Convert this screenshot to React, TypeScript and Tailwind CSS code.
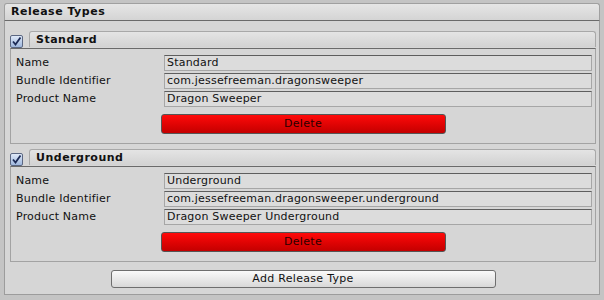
import React from 'react';

const font = { fontFamily: '"DejaVu Sans", Verdana, sans-serif' };

const CheckBox: React.FC = () => (
  <div className="w-[13px] h-[13px] mt-[4px] mr-[6px] shrink-0 rounded-[2px] border border-[#5b6782] bg-gradient-to-b from-[#dfe9f8] to-[#9fb7dd] flex items-center justify-center">
    <svg width="11" height="11" viewBox="0 0 11 11">
      <path d="M2 5.5 L4.5 8.5 L9.5 1.5" fill="none" stroke="#1c2a55" strokeWidth="1.8" />
    </svg>
  </div>
);

const Field: React.FC<{ label: string; value: string }> = ({ label, value }) => (
  <div className="flex items-center h-[16px]">
    <div className="w-[153px] pl-[5px] text-[11px] tracking-[0.2px] text-[#111]">{label}</div>
    <div className="flex-1 h-[16px] border border-[#a6a6a6] border-t-[#5e5e5e] bg-[#dcdcdc] pl-[2px] text-[11px] tracking-[0.2px] leading-[14px] text-[#111] mr-[3px]">
      {value}
    </div>
  </div>
);

const ReleaseType: React.FC<{ name: string; bundle: string; product: string }> = ({ name, bundle, product }) => (
  <div className="flex flex-col">
    <div className="flex">
      <CheckBox />
      <div className="flex-1 h-[16px] rounded-t-[3px] border border-b-0 border-[#a8a8a8] bg-gradient-to-b from-[#e4e4e4] to-[#d2d2d2] pl-[6px] text-[11px] font-bold tracking-[0.5px] leading-[15px] text-[#111]">
        {name}
      </div>
    </div>
    <div className="border border-[#a3a3a3] border-t-[#6a6a6a] bg-[#d6d6d6] pt-[6px] pb-[9px] flex flex-col gap-[2px]">
      <Field label="Name" value={name} />
      <Field label="Bundle Identifier" value={bundle} />
      <Field label="Product Name" value={product} />
      <div className="flex justify-center mt-[5px]">
        <div className="w-[285px] h-[20px] rounded-[3px] border border-[#555] bg-gradient-to-b from-[#ff0a0a] to-[#c40000] text-center text-[11px] tracking-[0.3px] leading-[18px] text-[#2a0000]">
          Delete
        </div>
      </div>
    </div>
  </div>
);

const App: React.FC = () => {
  return (
    <div className="w-[604px] h-[300px] bg-[#c4c4c4] pt-[3px] pl-[4px] pr-[4px] overflow-hidden" style={font}>
      <div className="flex flex-col">
        <div className="h-[18px] rounded-t-[3px] border border-[#a0a0a0] border-b-[#6a6a6a] bg-gradient-to-b from-[#e6e6e6] to-[#d4d4d4] pl-[6px] text-[11px] font-bold tracking-[0.5px] leading-[16px] text-[#111]">
          Release Types
        </div>
        <div className="h-[274px] border border-t-0 border-[#9c9c9c] bg-[#d6d6d6] pt-[10px] pl-[5px] pr-[3px] flex flex-col gap-[5px]">
          <ReleaseType name="Standard" bundle="com.jessefreeman.dragonsweeper" product="Dragon Sweeper" />
          <ReleaseType name="Underground" bundle="com.jessefreeman.dragonsweeper.underground" product="Dragon Sweeper Underground" />
          <div className="flex justify-center mt-[3px]">
            <div className="w-[385px] h-[18px] rounded-[3px] border border-[#6e6e6e] bg-gradient-to-b from-[#fafafa] to-[#d8d8d8] text-center text-[11px] tracking-[0.3px] leading-[16px] text-[#111]">
              Add Release Type
            </div>
          </div>
        </div>
      </div>
    </div>
  );
};

export default App;
